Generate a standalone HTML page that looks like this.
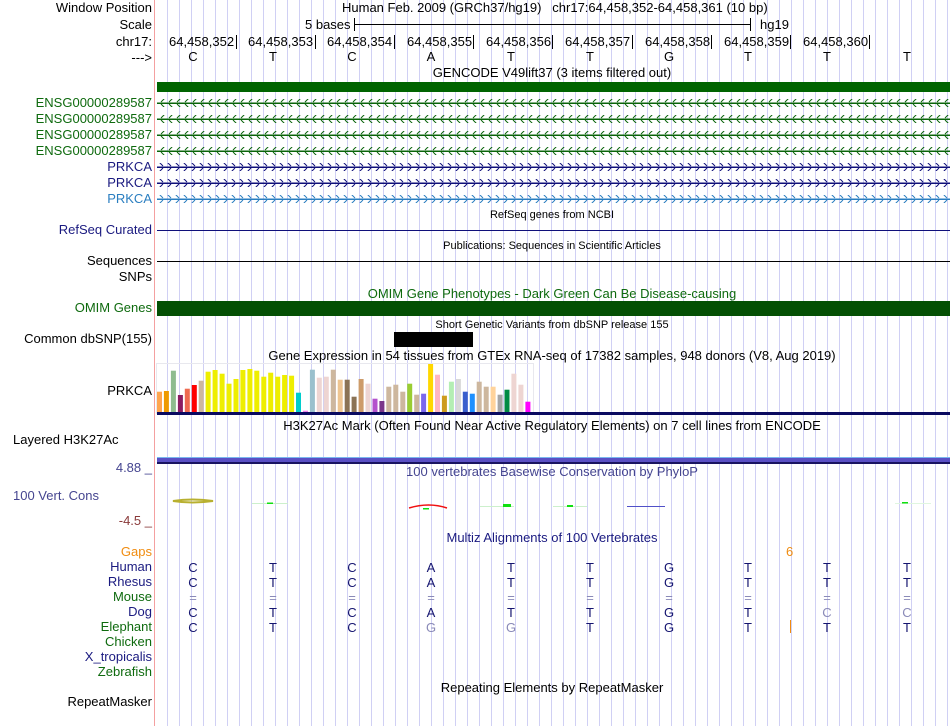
<!DOCTYPE html>
<html><head><meta charset="utf-8">
<style>
*{margin:0;padding:0;box-sizing:border-box}
body{width:950px;height:726px;background:#fff;position:relative;overflow:hidden;font-family:"Liberation Sans",sans-serif;font-size:13px;color:#000}
#grid{position:absolute;left:157px;top:0;width:793px;height:726px;
background-image:repeating-linear-gradient(to right,transparent 0,transparent 10px,#d0d0f4 10px,#d0d0f4 11px,transparent 11px,transparent 12px)}
#redline{position:absolute;left:154px;top:0;width:1px;height:726px;background:#f4a0a0}
.l{position:absolute;right:798px;white-space:nowrap;line-height:16px;text-align:right}
.t{position:absolute;white-space:nowrap;line-height:16px}
.c{position:absolute;white-space:nowrap;line-height:16px;transform:translateX(-50%)}
.s{font-size:11px}
.g{color:#0e6a0e}.n{color:#1a1a80}.b{color:#2a7ec0}.p{color:#454590}
.a{position:absolute;line-height:15px;transform:translateX(-50%);color:#151570}
.m{color:#8a8ab8}
.tk{position:absolute;top:35px;width:1px;height:14px;background:#000}
</style></head><body>
<div id="grid"></div>
<div id="redline"></div>

<div class="l" style="top:0">Window Position</div>
<div class="l" style="top:17px">Scale</div>
<div class="l" style="top:34px">chr17:</div>
<div class="l" style="top:50px">---&gt;</div>
<div class="t" style="left:342px;top:0">Human Feb. 2009 (GRCh37/hg19)&nbsp;&nbsp; chr17:64,458,352-64,458,361 (10 bp)</div>
<div class="t" style="left:305px;top:17px">5 bases</div>
<div style="position:absolute;left:354px;top:24px;width:397px;height:1px;background:#000"></div>
<div style="position:absolute;left:354px;top:18px;width:1px;height:13px;background:#000"></div>
<div style="position:absolute;left:750px;top:18px;width:1px;height:13px;background:#000"></div>
<div class="t" style="left:760px;top:17px">hg19</div>

<div class="t" style="left:169px;top:34px">64,458,352</div><div class="tk" style="left:236px"></div>
<div class="t" style="left:248px;top:34px">64,458,353</div><div class="tk" style="left:315px"></div>
<div class="t" style="left:327px;top:34px">64,458,354</div><div class="tk" style="left:394px"></div>
<div class="t" style="left:407px;top:34px">64,458,355</div><div class="tk" style="left:473px"></div>
<div class="t" style="left:486px;top:34px">64,458,356</div><div class="tk" style="left:552px"></div>
<div class="t" style="left:565px;top:34px">64,458,357</div><div class="tk" style="left:632px"></div>
<div class="t" style="left:645px;top:34px">64,458,358</div><div class="tk" style="left:711px"></div>
<div class="t" style="left:724px;top:34px">64,458,359</div><div class="tk" style="left:790px"></div>
<div class="t" style="left:803px;top:34px">64,458,360</div><div class="tk" style="left:869px"></div>

<div class="c" style="left:193px;top:49px">C</div>
<div class="c" style="left:273px;top:49px">T</div>
<div class="c" style="left:352px;top:49px">C</div>
<div class="c" style="left:431px;top:49px">A</div>
<div class="c" style="left:511px;top:49px">T</div>
<div class="c" style="left:590px;top:49px">T</div>
<div class="c" style="left:669px;top:49px">G</div>
<div class="c" style="left:748px;top:49px">T</div>
<div class="c" style="left:827px;top:49px">T</div>
<div class="c" style="left:907px;top:49px">T</div>

<div class="c" style="left:552px;top:65px">GENCODE V49lift37 (3 items filtered out)</div>
<div style="position:absolute;left:157px;top:82px;width:793px;height:10px;background:#006400"></div>

<div class="l g" style="top:95px">ENSG00000289587</div>
<div class="l g" style="top:111px">ENSG00000289587</div>
<div class="l g" style="top:127px">ENSG00000289587</div>
<div class="l g" style="top:143px">ENSG00000289587</div>
<div class="l n" style="top:159px">PRKCA</div>
<div class="l n" style="top:175px">PRKCA</div>
<div class="l b" style="top:191px">PRKCA</div>

<svg style="position:absolute;left:157px;top:95px" width="793" height="112">
<defs>
<pattern id="lf" width="8" height="8" patternUnits="userSpaceOnUse" x="1"><path d="M3 1L6 4L3 7" fill="none" stroke="#0a640a" stroke-width="1"/></pattern>
<pattern id="rt" width="8" height="8" patternUnits="userSpaceOnUse" x="1"><path d="M5 1L2 4L5 7" fill="none" stroke="#10107a" stroke-width="1"/></pattern>
<pattern id="rt2" width="8" height="8" patternUnits="userSpaceOnUse" x="1"><path d="M5 1L2 4L5 7" fill="none" stroke="#2a7ec0" stroke-width="1"/></pattern>
</defs>
<g fill="#0a640a">
<rect x="0" y="7.5" width="793" height="1.5"/><rect x="0" y="23.5" width="793" height="1.5"/><rect x="0" y="39.5" width="793" height="1.5"/><rect x="0" y="55.5" width="793" height="1.5"/>
</g>
<rect x="0" y="4" width="793" height="8" fill="url(#lf)"/>
<rect x="0" y="20" width="793" height="8" fill="url(#lf)"/>
<rect x="0" y="36" width="793" height="8" fill="url(#lf)"/>
<rect x="0" y="52" width="793" height="8" fill="url(#lf)"/>
<rect x="0" y="71.5" width="793" height="1.5" fill="#10107a"/>
<rect x="0" y="87.5" width="793" height="1.5" fill="#10107a"/>
<rect x="0" y="103.5" width="793" height="1.5" fill="#2a7ec0"/>
<rect x="0" y="68" width="793" height="8" fill="url(#rt)"/>
<rect x="0" y="84" width="793" height="8" fill="url(#rt)"/>
<rect x="0" y="100" width="793" height="8" fill="url(#rt2)"/>
</svg>

<div class="c s" style="left:552px;top:207px">RefSeq genes from NCBI</div>
<div class="l n" style="top:222px">RefSeq Curated</div>
<div style="position:absolute;left:157px;top:230px;width:793px;height:1px;background:#10107a"></div>
<div class="c s" style="left:552px;top:238px">Publications: Sequences in Scientific Articles</div>
<div class="l" style="top:253px">Sequences</div>
<div style="position:absolute;left:157px;top:261px;width:793px;height:1px;background:#000"></div>
<div class="l" style="top:269px">SNPs</div>
<div class="c g" style="left:552px;top:286px">OMIM Gene Phenotypes - Dark Green Can Be Disease-causing</div>
<div class="l g" style="top:300px">OMIM Genes</div>
<div style="position:absolute;left:157px;top:301px;width:793px;height:15px;background:#045004"></div>
<div class="c s" style="left:552px;top:317px">Short Genetic Variants from dbSNP release 155</div>
<div class="l" style="top:331px">Common dbSNP(155)</div>
<div style="position:absolute;left:394px;top:332px;width:79px;height:15px;background:#000"></div>
<div class="c" style="left:552px;top:348px">Gene Expression in 54 tissues from GTEx RNA-seq of 17382 samples, 948 donors (V8, Aug 2019)</div>
<div class="l" style="top:383px">PRKCA</div>

<svg style="position:absolute;left:150px;top:355px" width="800" height="62">
<rect x="6.5" y="8.5" width="377" height="50" fill="none" stroke="#e8e8ee" stroke-width="1"/>
<g id="bars"></g>
<rect x="7" y="57" width="793" height="3" fill="#0a0a60"/>
</svg>

<div class="c" style="left:552px;top:418px">H3K27Ac Mark (Often Found Near Active Regulatory Elements) on 7 cell lines from ENCODE</div>
<div class="t" style="left:13px;top:432px">Layered H3K27Ac</div>
<div style="position:absolute;left:157px;top:457px;width:793px;height:1px;background:#7ab8ee"></div>
<div style="position:absolute;left:157px;top:458px;width:793px;height:4px;background:#5a50c4"></div>
<div style="position:absolute;left:157px;top:462px;width:793px;height:2px;background:#1a1460"></div>

<div class="l p" style="top:460px">4.88 _</div>
<div class="c p" style="left:552px;top:464px">100 vertebrates Basewise Conservation by PhyloP</div>
<div class="t p" style="left:13px;top:488px">100 Vert. Cons</div>
<div class="l" style="top:513px;color:#8a3a3a">-4.5 _</div>
<svg style="position:absolute;left:157px;top:495px" width="793" height="20">
<path d="M16 6 Q35 3 56 6 Q35 9 16 6Z" fill="none" stroke="#b8b030" stroke-width="2"/>
<rect x="95" y="8" width="36" height="1" fill="#ccf0cc"/><rect x="110" y="7.5" width="6" height="1.5" fill="#10e010"/>
<path d="M252 13 Q272 7 290 13" fill="none" stroke="#f01010" stroke-width="1.5"/><rect x="266" y="13" width="6" height="1.5" fill="#10e010"/>
<rect x="323" y="11" width="34" height="1" fill="#ccf0cc"/><rect x="346" y="9" width="8" height="3" fill="#10e010"/>
<rect x="396" y="11" width="34" height="1" fill="#ccf0cc"/><rect x="410" y="10" width="6" height="2" fill="#10e010"/>
<rect x="470" y="11" width="38" height="1" fill="#5050c8"/>
<rect x="738" y="8" width="36" height="1" fill="#e0f6e0"/><rect x="745" y="7" width="6" height="1.5" fill="#10e010"/>
</svg>

<div class="c n" style="left:552px;top:530px">Multiz Alignments of 100 Vertebrates</div>
<div class="l" style="top:544px;color:#f08c10">Gaps</div>
<div class="t" style="left:786px;top:544px;color:#f08c10">6</div>
<div class="l n" style="top:559px">Human</div>
<div class="l n" style="top:574px">Rhesus</div>
<div class="l g" style="top:589px">Mouse</div>
<div class="l n" style="top:604px">Dog</div>
<div class="l g" style="top:619px">Elephant</div>
<div class="l g" style="top:634px">Chicken</div>
<div class="l n" style="top:649px">X_tropicalis</div>
<div class="l g" style="top:664px">Zebrafish</div>
<div class="l" style="top:694px">RepeatMasker</div>
<div class="c" style="left:552px;top:680px">Repeating Elements by RepeatMasker</div>
<div style="position:absolute;left:790px;top:620px;width:1px;height:13px;background:#f08c10"></div>

<div class="a" style="left:193px;top:560px">C</div><div class="a" style="left:273px;top:560px">T</div><div class="a" style="left:352px;top:560px">C</div><div class="a" style="left:431px;top:560px">A</div><div class="a" style="left:511px;top:560px">T</div><div class="a" style="left:590px;top:560px">T</div><div class="a" style="left:669px;top:560px">G</div><div class="a" style="left:748px;top:560px">T</div><div class="a" style="left:827px;top:560px">T</div><div class="a" style="left:907px;top:560px">T</div>
<div class="a" style="left:193px;top:575px">C</div><div class="a" style="left:273px;top:575px">T</div><div class="a" style="left:352px;top:575px">C</div><div class="a" style="left:431px;top:575px">A</div><div class="a" style="left:511px;top:575px">T</div><div class="a" style="left:590px;top:575px">T</div><div class="a" style="left:669px;top:575px">G</div><div class="a" style="left:748px;top:575px">T</div><div class="a" style="left:827px;top:575px">T</div><div class="a" style="left:907px;top:575px">T</div>
<div class="a m" style="left:193px;top:590px">=</div><div class="a m" style="left:273px;top:590px">=</div><div class="a m" style="left:352px;top:590px">=</div><div class="a m" style="left:431px;top:590px">=</div><div class="a m" style="left:511px;top:590px">=</div><div class="a m" style="left:590px;top:590px">=</div><div class="a m" style="left:669px;top:590px">=</div><div class="a m" style="left:748px;top:590px">=</div><div class="a m" style="left:827px;top:590px">=</div><div class="a m" style="left:907px;top:590px">=</div>
<div class="a" style="left:193px;top:605px">C</div><div class="a" style="left:273px;top:605px">T</div><div class="a" style="left:352px;top:605px">C</div><div class="a" style="left:431px;top:605px">A</div><div class="a" style="left:511px;top:605px">T</div><div class="a" style="left:590px;top:605px">T</div><div class="a" style="left:669px;top:605px">G</div><div class="a" style="left:748px;top:605px">T</div><div class="a m" style="left:827px;top:605px">C</div><div class="a m" style="left:907px;top:605px">C</div>
<div class="a" style="left:193px;top:620px">C</div><div class="a" style="left:273px;top:620px">T</div><div class="a" style="left:352px;top:620px">C</div><div class="a m" style="left:431px;top:620px">G</div><div class="a m" style="left:511px;top:620px">G</div><div class="a" style="left:590px;top:620px">T</div><div class="a" style="left:669px;top:620px">G</div><div class="a" style="left:748px;top:620px">T</div><div class="a" style="left:827px;top:620px">T</div><div class="a" style="left:907px;top:620px">T</div>

<script>
var tops=[110,108,47,120,101,90,77,50,45,56,86,72,45,42,47,65,53,65,60,62,113,167,44,68,65,44,74,74,125,72,86,131,138,95,89,110,86,119,116,27,59,122,80,72,110,116,80,95,95,119,104,56,89,140];
var cols=["#ffa54f","#ee9a00","#8fbc8f","#8b1c62","#ee6a50","#ff0000","#cdb79e","#eeee00","#eeee00","#eeee00","#eeee00","#eeee00","#eeee00","#eeee00","#eeee00","#eeee00","#eeee00","#eeee00","#eeee00","#eeee00","#00cdcd","#ee82ee","#9ac0cd","#eed5d2","#eed5d2","#cdb79e","#eec591","#8b7355","#8b7355","#cd9b69","#eed5d2","#b452cd","#7a378b","#cdb79e","#cdb79e","#cdb79e","#9acd32","#cdb79e","#7b68ee","#ffd700","#ffb6c1","#cd9b1d","#b4eeb4","#d9d9d9","#3a5fcd","#1e90ff","#cdb79e","#cdb79e","#ffd39b","#a6a6a6","#008b45","#eed5d2","#eed5d2","#ff00ff"];
var g=document.getElementById('bars'),s='';
for(var i=0;i<54;i++){var y=tops[i]/3,x=7+i*6.95;s+='<rect x="'+x.toFixed(1)+'" y="'+y.toFixed(1)+'" width="5" height="'+(57.7-y).toFixed(1)+'" fill="'+cols[i]+'"/>';}
g.innerHTML=s;
</script>
</body></html>
